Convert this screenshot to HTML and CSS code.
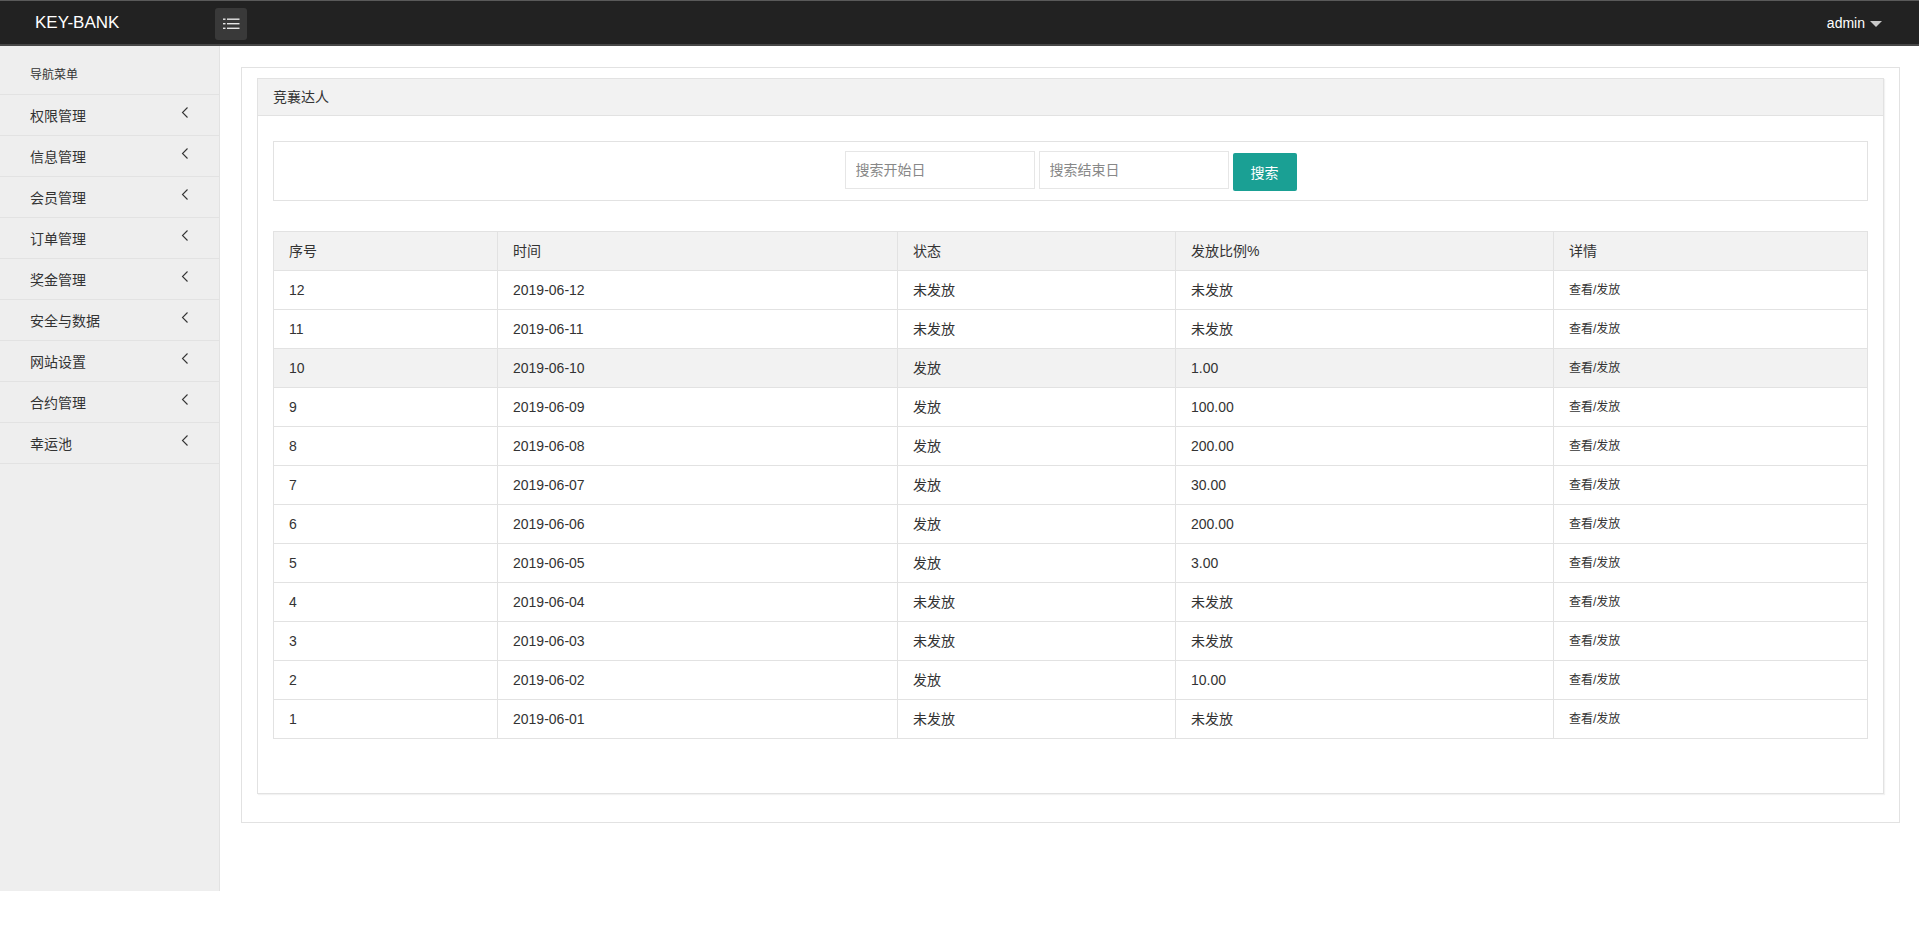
FILE: index.html
```html
<!DOCTYPE html>
<html lang="zh-CN">
<head>
<meta charset="utf-8">
<title>KEY-BANK</title>
<link rel="stylesheet" href="styles.css">
</head>
<body>
<header class="topbar">
  <div class="logo">KEY-BANK</div>
  <button class="toggle" type="button" aria-label="menu">
    <svg width="32" height="32" viewBox="0 0 32 32">
      <rect x="8" y="10.5" width="2.5" height="1.4" fill="#e6e6e6"/>
      <rect x="12" y="10.5" width="12.5" height="1.4" fill="#e6e6e6"/>
      <rect x="8" y="15" width="2.5" height="1.4" fill="#e6e6e6"/>
      <rect x="12" y="15" width="12.5" height="1.4" fill="#e6e6e6"/>
      <rect x="8" y="19.6" width="2.5" height="1.4" fill="#e6e6e6"/>
      <rect x="12" y="19.6" width="12.5" height="1.4" fill="#e6e6e6"/>
    </svg>
  </button>
  <div class="user">admin<span class="caret"></span></div>
</header>
<div class="layout">
  <aside class="sidebar">
    <div class="nav-title">导航菜单</div>
    <ul class="nav">
      <li class="nav-item"><span>权限管理</span><svg class="chev" width="8" height="12" viewBox="0 0 8 12"><polyline points="6.5,0.5 1.5,5.5 6.5,10.5" fill="none" stroke="#333" stroke-width="1.1"/></svg></li>
      <li class="nav-item"><span>信息管理</span><svg class="chev" width="8" height="12" viewBox="0 0 8 12"><polyline points="6.5,0.5 1.5,5.5 6.5,10.5" fill="none" stroke="#333" stroke-width="1.1"/></svg></li>
      <li class="nav-item"><span>会员管理</span><svg class="chev" width="8" height="12" viewBox="0 0 8 12"><polyline points="6.5,0.5 1.5,5.5 6.5,10.5" fill="none" stroke="#333" stroke-width="1.1"/></svg></li>
      <li class="nav-item"><span>订单管理</span><svg class="chev" width="8" height="12" viewBox="0 0 8 12"><polyline points="6.5,0.5 1.5,5.5 6.5,10.5" fill="none" stroke="#333" stroke-width="1.1"/></svg></li>
      <li class="nav-item"><span>奖金管理</span><svg class="chev" width="8" height="12" viewBox="0 0 8 12"><polyline points="6.5,0.5 1.5,5.5 6.5,10.5" fill="none" stroke="#333" stroke-width="1.1"/></svg></li>
      <li class="nav-item"><span>安全与数据</span><svg class="chev" width="8" height="12" viewBox="0 0 8 12"><polyline points="6.5,0.5 1.5,5.5 6.5,10.5" fill="none" stroke="#333" stroke-width="1.1"/></svg></li>
      <li class="nav-item"><span>网站设置</span><svg class="chev" width="8" height="12" viewBox="0 0 8 12"><polyline points="6.5,0.5 1.5,5.5 6.5,10.5" fill="none" stroke="#333" stroke-width="1.1"/></svg></li>
      <li class="nav-item"><span>合约管理</span><svg class="chev" width="8" height="12" viewBox="0 0 8 12"><polyline points="6.5,0.5 1.5,5.5 6.5,10.5" fill="none" stroke="#333" stroke-width="1.1"/></svg></li>
      <li class="nav-item"><span>幸运池</span><svg class="chev" width="8" height="12" viewBox="0 0 8 12"><polyline points="6.5,0.5 1.5,5.5 6.5,10.5" fill="none" stroke="#333" stroke-width="1.1"/></svg></li>
    </ul>
  </aside>
  <main class="main">
    <div class="outer">
      <div class="panel">
        <div class="panel-head">竞襄达人</div>
        <div class="panel-body">
          <div class="search">
            <input class="inp" type="text" placeholder="搜索开始日">
            <input class="inp" type="text" placeholder="搜索结束日">
            <button class="btn" type="button">搜索</button>
          </div>
          <table class="tbl">
            <colgroup>
              <col class="c1"><col class="c2"><col class="c3"><col class="c4"><col class="c5">
            </colgroup>
            <thead>
              <tr><th>序号</th><th>时间</th><th>状态</th><th>发放比例%</th><th>详情</th></tr>
            </thead>
            <tbody>
              <tr><td>12</td><td>2019-06-12</td><td>未发放</td><td>未发放</td><td class="op">查看/发放</td></tr>
              <tr><td>11</td><td>2019-06-11</td><td>未发放</td><td>未发放</td><td class="op">查看/发放</td></tr>
              <tr class="hover"><td>10</td><td>2019-06-10</td><td>发放</td><td>1.00</td><td class="op">查看/发放</td></tr>
              <tr><td>9</td><td>2019-06-09</td><td>发放</td><td>100.00</td><td class="op">查看/发放</td></tr>
              <tr><td>8</td><td>2019-06-08</td><td>发放</td><td>200.00</td><td class="op">查看/发放</td></tr>
              <tr><td>7</td><td>2019-06-07</td><td>发放</td><td>30.00</td><td class="op">查看/发放</td></tr>
              <tr><td>6</td><td>2019-06-06</td><td>发放</td><td>200.00</td><td class="op">查看/发放</td></tr>
              <tr><td>5</td><td>2019-06-05</td><td>发放</td><td>3.00</td><td class="op">查看/发放</td></tr>
              <tr><td>4</td><td>2019-06-04</td><td>未发放</td><td>未发放</td><td class="op">查看/发放</td></tr>
              <tr><td>3</td><td>2019-06-03</td><td>未发放</td><td>未发放</td><td class="op">查看/发放</td></tr>
              <tr><td>2</td><td>2019-06-02</td><td>发放</td><td>10.00</td><td class="op">查看/发放</td></tr>
              <tr><td>1</td><td>2019-06-01</td><td>未发放</td><td>未发放</td><td class="op">查看/发放</td></tr>
            </tbody>
          </table>
        </div>
      </div>
    </div>
  </main>
</div>
</body>
</html>
```

FILE: styles.css
```css
* { box-sizing: border-box; }
html, body { margin: 0; padding: 0; background: #fff; }
body {
  font-family: "Liberation Sans", Arial, "Noto Sans CJK SC", sans-serif;
  font-size: 14px;
  color: #333;
}
ul { list-style: none; margin: 0; padding: 0; }

.topbar {
  display: flex;
  align-items: flex-start;
  height: 46px;
  background: #222;
  border-top: 1px solid #5a5a5a;
  border-bottom: 2px solid #474747;
}
.logo {
  width: 215px;
  padding-left: 35px;
  color: #fff;
  font-size: 17px;
  line-height: 44px;
  letter-spacing: 0;
}
.toggle {
  width: 32px;
  height: 32px;
  margin-top: 7px;
  padding: 0;
  border: 0;
  border-radius: 3px;
  background: #393939;
  display: block;
}
.toggle svg { display: block; }
.user {
  margin-left: auto;
  margin-right: 37px;
  color: #fff;
  font-size: 14px;
  line-height: 44px;
  display: flex;
  align-items: center;
}
.caret {
  display: inline-block;
  width: 0;
  height: 0;
  margin-left: 5px;
  margin-top: 1px;
  border-left: 6px solid transparent;
  border-right: 6px solid transparent;
  border-top: 6px solid #c8c8c8;
}

.layout { display: flex; align-items: flex-start; }
.sidebar {
  width: 220px;
  flex: none;
  height: 845px;
  background: #eee;
  border-right: 1px solid #e2e2e2;
}
.nav-title {
  height: 49px;
  padding-left: 30px;
  padding-top: 9px;
  font-size: 12px;
  line-height: 40px;
  border-bottom: 1px solid #e2e2e2;
  color: #333;
}
.nav-item {
  height: 41px;
  display: flex;
  align-items: center;
  justify-content: space-between;
  padding: 1px 30px 0 30px;
  border-bottom: 1px solid #e2e2e2;
  font-size: 14px;
  color: #333;
}
.nav-item span { line-height: 20px; }
.chev { display: block; margin-top: -6px; }

.main { flex: 1; min-width: 0; }
.outer {
  margin: 21px 19px 0 21px;
  border: 1px solid #e2e2e2;
  padding: 10px 15px 28px 15px;
}
.panel {
  border: 1px solid #e2e2e2;
  box-shadow: 1px 1px 1px rgba(0,0,0,0.05);
}
.panel-head {
  height: 37px;
  background: #f2f2f2;
  border-bottom: 1px solid #e2e2e2;
  padding-left: 15px;
  line-height: 37px;
  font-size: 14px;
  color: #333;
}
.panel-body { padding: 25px 15px 54px 15px; }

.search {
  display: flex;
  justify-content: center;
  align-items: flex-start;
  gap: 4px;
  border: 1px solid #e2e2e2;
  padding: 9px 0 9px 0;
  height: 60px;
}
.inp {
  width: 190px;
  height: 38px;
  border: 1px solid #e6e6e6;
  padding: 0 10px;
  font-family: "Liberation Sans", Arial, "Noto Sans CJK SC", sans-serif;
  font-size: 14px;
  color: #333;
  background: #fff;
  outline: none;
}
.inp::placeholder { color: #888; }
.btn {
  width: 64px;
  height: 38px;
  margin-top: 2px;
  border: 0;
  border-radius: 2px;
  background: #1aa094;
  color: #fff;
  font-family: "Liberation Sans", Arial, "Noto Sans CJK SC", sans-serif;
  font-size: 14px;
  padding: 0;
}

.tbl {
  margin-top: 30px;
  width: 100%;
  table-layout: fixed;
  border-collapse: collapse;
  font-size: 14px;
  color: #333;
}
.c1 { width: 224px; }
.c2 { width: 400px; }
.c3 { width: 278px; }
.c4 { width: 378px; }
.tbl th, .tbl td {
  border: 1px solid #e2e2e2;
  padding: 9px 15px;
  line-height: 20px;
  height: 39px;
  text-align: left;
  font-weight: normal;
}
.tbl thead tr { background: #f2f2f2; }
.tbl tr.hover { background: #f2f2f2; }
.tbl td.op { font-size: 12px; }
```
